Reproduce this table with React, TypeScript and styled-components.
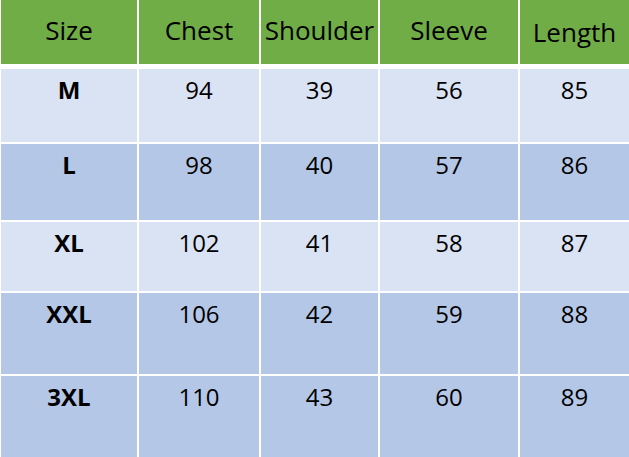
import React from "react";
import styled, { createGlobalStyle } from "styled-components";

const GlobalStyle = createGlobalStyle`
  html, body {
    margin: 0;
    padding: 0;
    background: #ffffff;
  }
  body {
    font-family: "Open Sans", "Noto Sans", sans-serif;
    color: #000000;
  }
`;

type Row = {
  size: string;
  values: number[];
  light: boolean;
  height: number;
};

const headers = ["Size", "Chest", "Shoulder", "Sleeve", "Length"];

const rows: Row[] = [
  { size: "M", values: [94, 39, 56, 85], light: true, height: 73 },
  { size: "L", values: [98, 40, 57, 86], light: false, height: 76 },
  { size: "XL", values: [102, 41, 58, 87], light: true, height: 69 },
  { size: "XXL", values: [106, 42, 59, 88], light: false, height: 81 },
  { size: "3XL", values: [110, 43, 60, 89], light: false, height: 81 },
];

const Table = styled.div`
  width: 629px;
  height: 457px;
  overflow: hidden;
  padding-left: 1px;
  box-sizing: border-box;
  display: flex;
  flex-direction: column;
  gap: 2px;
  background: #ffffff;
`;

const RowGrid = styled.div<{ $h: number }>`
  display: grid;
  grid-template-columns: 136px 120px 117px 138px 1fr;
  column-gap: 2px;
  height: ${(p) => p.$h}px;
  flex-shrink: 0;
`;

const HeaderRow = styled(RowGrid)`
  margin-bottom: 3px;
`;

const HeadCell = styled.div<{ $drop?: number }>`
  background: #70ad47;
  display: flex;
  align-items: center;
  justify-content: center;
  font-size: 26px;
  line-height: 1;
  padding-bottom: ${(p) => 4 - (p.$drop ?? 0)}px;
  box-sizing: border-box;
  white-space: nowrap;
`;

const Cell = styled.div<{ $light: boolean; $bold?: boolean }>`
  background: ${(p) => (p.$light ? "#dae3f3" : "#b4c7e7")};
  text-align: center;
  font-size: 24px;
  line-height: 1;
  padding-top: 9px;
  box-sizing: border-box;
  font-weight: ${(p) => (p.$bold ? 700 : 400)};
`;

export default function App() {
  return (
    <>
      <GlobalStyle />
      <Table>
        <HeaderRow $h={64}>
          {headers.map((h) => (
            <HeadCell key={h} $drop={h === "Length" ? 3 : 0}>
              {h}
            </HeadCell>
          ))}
        </HeaderRow>
        {rows.map((r) => (
          <RowGrid key={r.size} $h={r.height}>
            <Cell $light={r.light} $bold>
              {r.size}
            </Cell>
            {r.values.map((v, i) => (
              <Cell key={i} $light={r.light}>
                {v}
              </Cell>
            ))}
          </RowGrid>
        ))}
      </Table>
    </>
  );
}
